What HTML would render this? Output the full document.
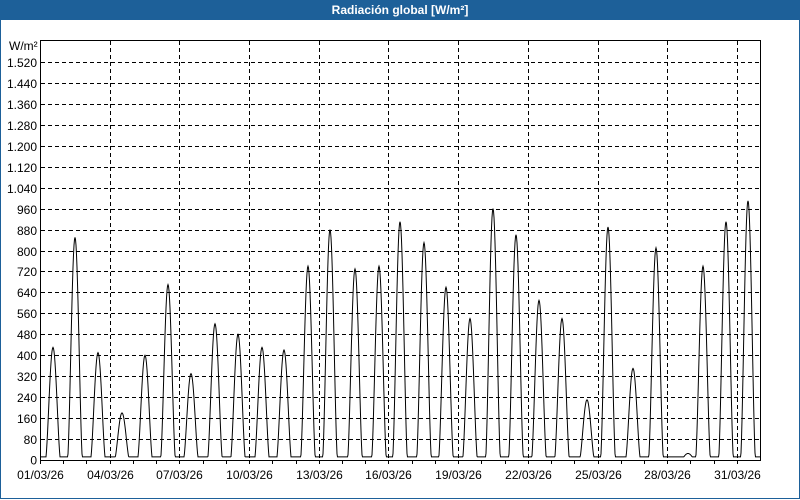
<!DOCTYPE html>
<html><head><meta charset="utf-8"><style>
html,body{margin:0;padding:0;background:#fff;}
body{width:800px;height:500px;position:relative;overflow:hidden;font-family:"Liberation Sans",sans-serif;}
.win{position:absolute;left:0;top:0;width:798px;height:498px;border:1px solid #1d6099;border-top:none;}
.title{position:absolute;left:0;top:0;width:800px;height:20px;background:#1d6099;color:#fff;font-weight:bold;font-size:12px;line-height:20px;text-align:center;}
svg{position:absolute;left:0;top:0;}
svg text{font-family:"Liberation Sans",sans-serif;font-size:12px;fill:#000;}
</style></head><body>
<div class="win"></div>
<div class="title">Radiación global [W/m²]</div>
<svg id="s" width="800" height="500" xmlns="http://www.w3.org/2000/svg">
<g id="grid" stroke="#000" stroke-width="1" stroke-dasharray="4,3" fill="none" shape-rendering="crispEdges"></g>
<g id="lab"></g>
<path id="data" fill="none" stroke="#000" stroke-width="1"/>
<rect x="40.5" y="40.5" width="720" height="420" fill="none" stroke="#000" shape-rendering="crispEdges"/>
<text x="9" y="50">W/m²</text>
</svg>
<script>
var ns="http://www.w3.org/2000/svg",g=document.getElementById('grid'),lab=document.getElementById('lab');
function Y(v){return 460-v*398/1520;}
function el(p,t,a,txt){var e=document.createElementNS(ns,t);for(var k in a)e.setAttribute(k,a[k]);if(txt!=null)e.textContent=txt;p.appendChild(e);return e;}
for(var v=80;v<=1520;v+=80){var y=Math.round(Y(v))+0.5;el(g,'line',{x1:41,x2:760,y1:y,y2:y});
var s=v>=1000?(Math.floor(v/1000)+'.'+String(v%1000).padStart(3,'0')):String(v);el(lab,'text',{x:37,y:y+4.5,'text-anchor':'end'},s);}
el(lab,'text',{x:37,y:464.5,'text-anchor':'end'},'0');
var dx=23.23;
for(var d=0;d<31;d++){var x=Math.round(40+d*dx)+0.5;
el(lab,'line',{x1:x,x2:x,y1:460,y2:464,stroke:'#000','shape-rendering':'crispEdges'});
if(d%3==0){if(d>0)el(g,'line',{x1:x,x2:x,y1:41,y2:460});
el(lab,'text',{x:x,y:479,'text-anchor':'middle'},String(d+1).padStart(2,'0')+'/03/26');}}
var peaks=[[53,430],[75,850],[98,410],[122,180],[145,400],[168,670],[191,330],[215,520],[238,480],[262,430],[284,420],[308,740],[330,880],[355,730],[379,740],[400,910],[424,830],[446,660],[470,540],[493,960],[516,860],[539,610],[562,540],[587,230],[608,890],[633,350],[656,810],[688,25],[703,740],[726,910],[748,990]];
var dpath='';
for(var x=41;x<=760;x+=0.5){var v=12;
for(var i=0;i<peaks.length;i++){var t=(x-peaks[i][0])/7.5;if(Math.abs(t)<1){var c=Math.cos(t*Math.PI/2);v=Math.max(v,peaks[i][1]*Math.pow(c,1.6));}}
dpath+=(dpath?'L':'M')+x+' '+Y(v).toFixed(1);}
document.getElementById('data').setAttribute('d',dpath);
</script>
</body></html>
